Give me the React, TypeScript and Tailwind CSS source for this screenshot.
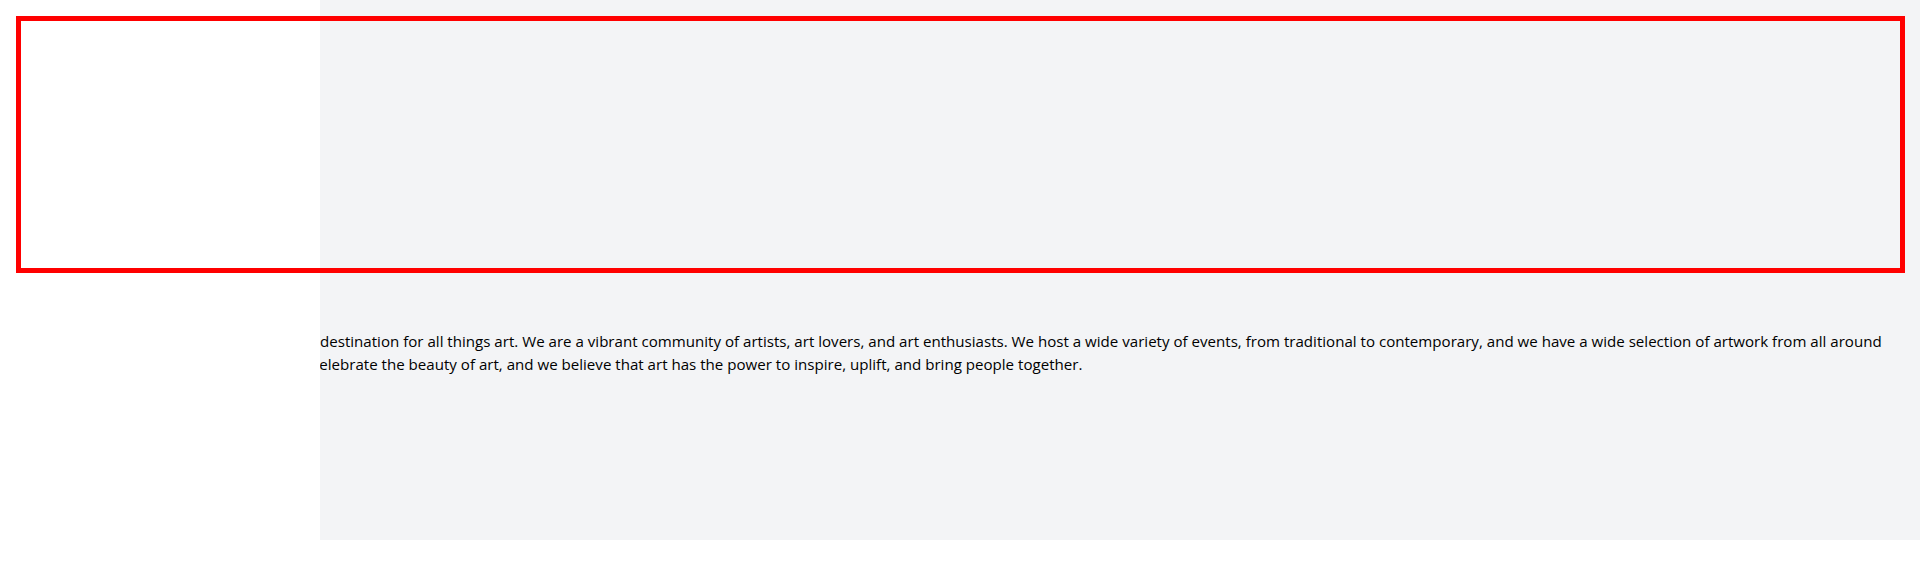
import React from "react";

const LINE1 =
  "destination for all things art. We are a vibrant community of artists, art lovers, and art enthusiasts. We host a wide variety of events, from traditional to contemporary, and we have a wide selection of artwork from all around";
const LINE2 =
  "celebrate the beauty of art, and we believe that art has the power to inspire, uplift, and bring people together.";

export default function App() {
  return (
    <div className="relative h-[572px] w-full bg-white font-['Open_Sans',sans-serif]">
      <div className="flex h-[540px] w-full">
        <aside className="w-[320px] shrink-0 bg-white" />
        <main className="flex-1 overflow-hidden bg-[#f3f4f6]">
          <p className="pt-[330px] text-[15.1px] leading-[23px] text-black">
            <span className="block whitespace-nowrap">{LINE1}</span>
            <span className="-ml-[8px] block whitespace-nowrap">{LINE2}</span>
          </p>
        </main>
      </div>
      <div className="pointer-events-none absolute left-[16px] top-[16px] h-[257px] w-[1889px] border-[5px] border-[#ff0000]" />
    </div>
  );
}
